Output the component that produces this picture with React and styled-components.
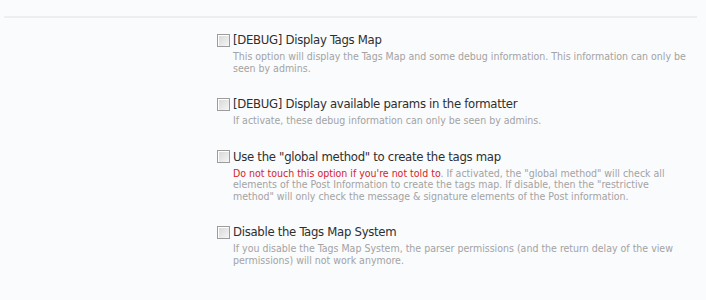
import React from 'react';
import styled, { createGlobalStyle } from 'styled-components';

const GlobalStyle = createGlobalStyle`
  html, body {
    margin: 0;
    padding: 0;
    background: #fafbfd;
  }
  body {
    font-family: "DejaVu Sans Condensed", "DejaVu Sans", sans-serif;
    font-stretch: condensed;
  }
`;

const options = [
  {
    label: '[DEBUG] Display Tags Map',
    explain: 'This option will display the Tags Map and some debug information. This information can only be seen by admins.'
  },
  {
    label: '[DEBUG] Display available params in the formatter',
    explain: 'If activate, these debug information can only be seen by admins.'
  },
  {
    label: 'Use the "global method" to create the tags map',
    warning: "Do not touch this option if you're not told to",
    explain: '. If activated, the "global method" will check all elements of the Post Information to create the tags map. If disable, then the "restrictive method" will only check the message & signature elements of the Post information.'
  },
  {
    label: 'Disable the Tags Map System',
    explain: 'If you disable the Tags Map System, the parser permissions (and the return delay of the view permissions) will not work anymore.'
  }
];

const App = () => {
  return (
    <Page>
      <GlobalStyle />
      <Divider />
      <OptionList>
        {options.map((opt, i) => (
          <Option key={i}>
            <Label>
              <Box />
              {opt.label}
            </Label>
            <Explain>
              {opt.warning && <Warning>{opt.warning}</Warning>}
              {opt.explain}
            </Explain>
          </Option>
        ))}
      </OptionList>
    </Page>
  );
};

const Page = styled.div`
  width: 706px;
  height: 300px;
  padding-top: 16px;
  box-sizing: border-box;
`;

const Divider = styled.div`
  margin: 0 9px 0 4px;
  height: 2px;
  background: #eceef2;
`;

const OptionList = styled.div`
  display: flex;
  flex-direction: column;
  gap: 22px;
  padding: 14px 16px 0 217px;
`;

const Option = styled.div`
  display: flex;
  flex-direction: column;
`;

const Label = styled.label`
  display: flex;
  align-items: center;
  gap: 3px;
  font-size: 13px;
  letter-spacing: -0.3px;
  line-height: 16px;
  color: #2f2f2f;
`;

const Box = styled.span`
  width: 11px;
  height: 11px;
  border: 1px solid #9c9c9c;
  background: linear-gradient(135deg, #d6d6d6, #f6f6f6);
  box-shadow: inset 1px 1px 0 #fff;
  flex-shrink: 0;
`;

const Explain = styled.div`
  margin-left: 16px;
  margin-top: 3px;
  font-size: 10.5px;
  line-height: 11.5px;
  color: #a3a3a3;
`;

const Warning = styled.span`
  color: #d11f2b;
`;

export default App;
